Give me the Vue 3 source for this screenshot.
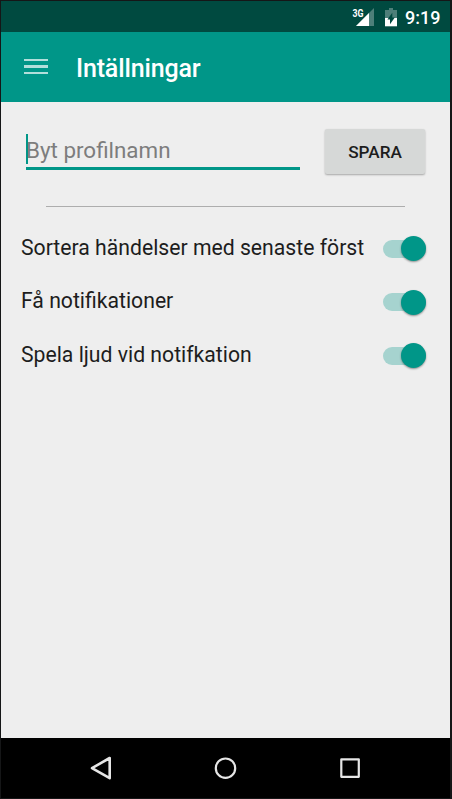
<script setup>
import { ref } from 'vue'

const profileName = ref('')
const settings = ref([
  { label: 'Sortera händelser med senaste först', on: true },
  { label: 'Få notifikationer', on: true },
  { label: 'Spela ljud vid notifkation', on: true }
])
</script>

<template>
  <div class="device">
    <div class="status">
      <svg class="signal" width="23" height="20" viewBox="0 0 23 20">
        <path d="M22 1V19H4Z" fill="#4d7f79" />
        <path d="M17 6V19H4Z" fill="#fff" />
        <rect x="0" y="1" width="12" height="9" fill="#004a40" />
        <text x="0.5" y="9.5" class="network" textLength="11" lengthAdjust="spacingAndGlyphs">3G</text>
      </svg>
      <svg class="battery" width="12" height="19" viewBox="0 0 12 19">
        <path d="M4 0H8V2H12V10H0V2H4Z" fill="#4d7f79" />
        <path d="M0 10H12V18.3H0Z" fill="#fff" />
        <path d="M7.3 4.8V9.4H9.8L5 16.3V11.6H2.4Z" fill="#004a40" />
      </svg>
      <span class="clock">9:19</span>
    </div>
    <header class="appbar">
      <button class="menu" aria-label="Meny"><i></i><i></i><i></i></button>
      <h1>Intällningar</h1>
    </header>
    <main>
      <form class="profile" @submit.prevent>
        <div class="field">
          <span class="caret"></span>
          <input v-model="profileName" placeholder="Byt profilnamn" />
        </div>
        <button class="save">SPARA</button>
      </form>
      <hr />
      <div v-for="s in settings" :key="s.label" class="row" @click="s.on = !s.on">
        <span class="label">{{ s.label }}</span>
        <span class="switch" :class="{ off: !s.on }"><b></b></span>
      </div>
    </main>
    <nav>
      <svg width="449" height="59" viewBox="1 738 449 59" fill="none" stroke="#e6e6e6" stroke-width="2.6" stroke-linejoin="round">
        <path d="M92 768.2L109.7 758V778.2Z" />
        <circle cx="225.5" cy="768.2" r="9.7" stroke-width="2.2" />
        <rect x="341.3" y="759.3" width="17.5" height="17.5" stroke-width="2.2" />
      </svg>
    </nav>
  </div>
</template>

<style>
body { margin: 0; background: #151617; }
</style>

<style scoped>
.device {
  box-sizing: border-box;
  width: 452px;
  height: 799px;
  border: solid #151617;
  border-width: 1px 2px 1px 1px;
  display: flex;
  flex-direction: column;
  font-family: Roboto, sans-serif;
  background: #eee;
  color: #1d1d1d;
}
button { border: 0; padding: 0; font-family: inherit; }
.status {
  height: 31px;
  background: #004a40;
  display: flex;
  align-items: flex-start;
  color: #fff;
}
.signal { margin: 6px 0 0 351px; }
.network { font: 700 10px Roboto, sans-serif; fill: #fff; }
.battery { margin: 7px 0 0 10px; }
.clock { margin: 6px 0 0 8px; font-size: 18px; line-height: 21px; font-weight: 500; }
.appbar {
  height: 70px;
  background: #009688;
  display: flex;
  align-items: center;
}
.menu {
  display: flex;
  flex-direction: column;
  gap: 4px;
  width: 24px;
  margin: -1px 28px 0 23px;
  background: none;
}
.menu i { height: 2.5px; background: #b2dfdb; }
h1 { margin: 3px 0 0; color: #fff; font-size: 25px; line-height: 30px; font-weight: 500; letter-spacing: -0.15px; }
main { flex: 1; }
.profile {
  display: flex;
  justify-content: space-between;
  padding: 27px 25px 0 25px;
}
.field {
  display: flex;
  box-sizing: border-box;
  width: 274px;
  height: 41px;
  padding-top: 5px;
  border-bottom: 3px solid #009688;
}
.caret { width: 2px; height: 30px; background: #009688; flex: none; }
input {
  flex: 1;
  min-width: 0;
  height: 31px;
  box-sizing: border-box;
  margin-left: -2px;
  border: 0;
  padding: 0;
  outline: 0;
  background: none;
  font: 22.4px Roboto, sans-serif;
}
input::placeholder { color: #7d7d7d; opacity: 1; }
.save {
  width: 100px;
  height: 45px;
  border-radius: 2px;
  background: #d6d8d7;
  box-shadow: 0 1px 2px rgba(0, 0, 0, 0.3);
  color: #1d1d1d;
  font-size: 17.2px;
  font-weight: 500;
}
hr { height: 1px; border: 0; margin: 32px 45px 15px 45px; background: #adadad; }
.row {
  height: 53.6px;
  padding: 0 24.5px 0 20px;
  display: flex;
  align-items: center;
  justify-content: space-between;
}
.label { font-size: 21.2px; line-height: 26px; margin-top: -2px; white-space: nowrap; }
.switch {
  display: flex;
  align-items: center;
  justify-content: flex-end;
  width: 42.5px;
  height: 18px;
  border-radius: 9px;
  background: #a6d3cf;
}
.switch b {
  width: 25px;
  height: 25px;
  flex: none;
  border-radius: 50%;
  background: #009688;
  box-shadow: 0 1px 2px rgba(0, 0, 0, 0.4);
}
.switch.off { justify-content: flex-start; background: #bbb; }
.switch.off b { background: #f1f1f1; }
nav { height: 60px; background: #000; }
nav svg { display: block; }
</style>
